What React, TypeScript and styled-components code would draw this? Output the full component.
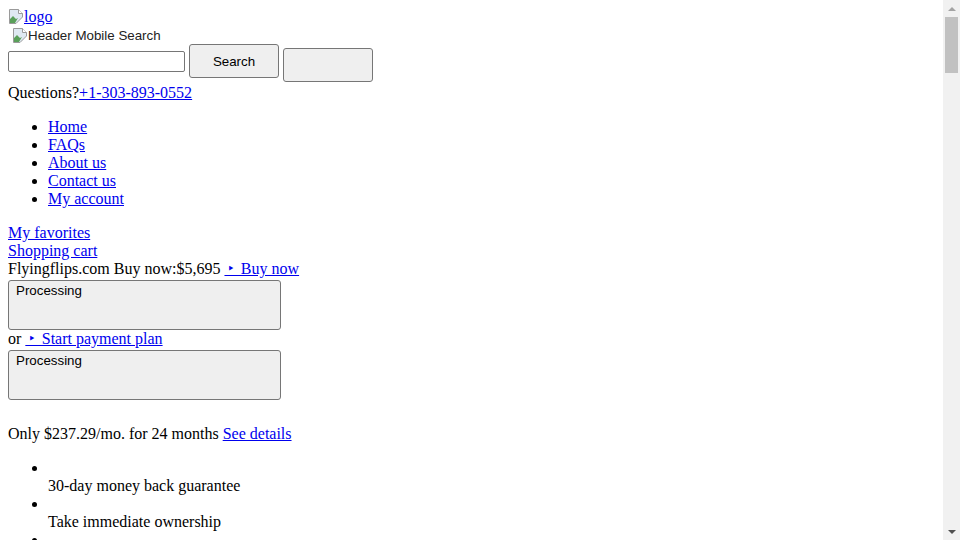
import styled, { createGlobalStyle } from "styled-components";

const GlobalStyle = createGlobalStyle`
  body {
    margin: 8px;
    font-family: "Liberation Serif", "Times New Roman", serif;
    font-size: 16px;
    color: #000;
    background: #fff;
  }
  a {
    color: #0000ee;
  }
`;

const Line = styled.div`
  height: 18px;
  line-height: 18px;
  white-space: nowrap;
`;

const LogoLink = styled.a`
  svg {
    vertical-align: -2px;
  }
`;

const MobileSearch = styled.div`
  display: flex;
  align-items: center;
  height: 18px;
  padding-left: 4px;
  font-family: "Liberation Sans", Arial, sans-serif;
  font-size: 13.333px;
  color: #222;
`;

const SearchRow = styled.form`
  display: flex;
  align-items: flex-start;
  gap: 4px;
  height: 40px;
`;

const SearchInput = styled.input`
  box-sizing: border-box;
  width: 177px;
  height: 21px;
  margin: 7px 0 0;
  padding: 1px 2px;
  border: 1px solid #767676;
  border-radius: 2px;
  font-family: "Liberation Sans", Arial, sans-serif;
  font-size: 13.333px;
`;

const GreyButton = styled.button<{ $offset?: number }>`
  box-sizing: border-box;
  width: 90px;
  height: 34px;
  margin: ${(p) => p.$offset || 0}px 0 0;
  border: 1px solid #767676;
  border-radius: 3px;
  background: #efefef;
  font-family: "Liberation Sans", Arial, sans-serif;
  font-size: 13.333px;
  color: #000;
`;

const NavList = styled.ul`
  margin: 16px 0;
  padding-left: 40px;
  line-height: 18px;
`;

const ProcessingBox = styled.div`
  box-sizing: border-box;
  width: 273px;
  height: 50px;
  margin-top: 2px;
  padding: 2px 7px;
  border: 1px solid #767676;
  border-radius: 3px;
  background: #efefef;
  font-family: "Liberation Sans", Arial, sans-serif;
  font-size: 13.333px;
  line-height: 16px;
`;

const PlanLine = styled(Line)`
  margin-top: 25px;
`;

const PerkList = styled.ul`
  margin: 16px 0;
  padding-left: 40px;
  line-height: 18px;
`;

const PerkIcon = styled.span`
  display: inline-block;
  height: 18px;
  vertical-align: top;
`;

const PerkText = styled.div`
  line-height: 18px;
`;

const Section = styled.section`
  margin-top: 24px;
`;

const SectionTitle = styled.h2`
  font-size: 24px;
  margin: 20px 0;
`;

const Para = styled.p`
  margin: 16px 0;
  line-height: 18px;
`;

/* stand-in for the browser's classic scrollbar seen in the screenshot */
const ScrollTrack = styled.div`
  position: fixed;
  top: 0;
  right: 0;
  bottom: 0;
  width: 17px;
  display: flex;
  flex-direction: column;
  align-items: center;
  background: #f1f1f1;
`;

const ScrollArrow = styled.div`
  display: flex;
  align-items: center;
  justify-content: center;
  width: 17px;
  height: 17px;
  flex: none;
`;

const ScrollThumb = styled.div`
  width: 13px;
  height: 56px;
  flex: none;
  background: #c1c1c1;
`;

const ScrollSpace = styled.div`
  flex: 1;
`;

const BrokenImage = () => (
  <svg width="16" height="16" viewBox="0 0 16 16" aria-hidden>
    <path d="M1.5 1.5h9l4 4v3.5l-6.5 6.5h-6.5z" fill="#dfe9f2" stroke="#9a9a9a" />
    <path d="M10.5 1.5v4h4" fill="#fff" stroke="#9a9a9a" />
    <path d="M2 15V11l3-3 3 3 2-1-3 5z" fill="#5aa05a" />
  </svg>
);

const perks = [
  "30-day money back guarantee",
  "Take immediate ownership",
  "Secure ownership transfer",
  "Fast transfer, usually under 24 hours",
  "Hassle free",
];

const navItems = ["Home", "FAQs", "About us", "Contact us", "My account"];

export default function App() {
  return (
    <>
      <GlobalStyle />
      <Line>
        <LogoLink href="#">
          <BrokenImage />
          logo
        </LogoLink>
      </Line>
      <MobileSearch>
        <BrokenImage />
        Header Mobile Search
      </MobileSearch>
      <SearchRow onSubmit={(e) => e.preventDefault()}>
        <SearchInput type="text" />
        <GreyButton type="submit">Search</GreyButton>
        <GreyButton type="button" $offset={4} />
      </SearchRow>
      <Line>
        Questions?<a href="#">+1-303-893-0552</a>
      </Line>
      <NavList>
        {navItems.map((item) => (
          <li key={item}>
            <a href="#">{item}</a>
          </li>
        ))}
      </NavList>
      <Line>
        <a href="#">My favorites</a>
      </Line>
      <Line>
        <a href="#">Shopping cart</a>
      </Line>
      <Line>
        Flyingflips.com Buy now:$5,695 <a href="#">{"\u2009‣\u2009 Buy now"}</a>
      </Line>
      <ProcessingBox>Processing</ProcessingBox>
      <Line>
        or <a href="#">{"\u2009‣\u2009 Start payment plan"}</a>
      </Line>
      <ProcessingBox>Processing</ProcessingBox>
      <PlanLine>
        Only $237.29/mo. for 24 months <a href="#">See details</a>
      </PlanLine>
      <PerkList>
        {perks.map((perk) => (
          <li key={perk}>
            <PerkIcon />
            <PerkText>{perk}</PerkText>
          </li>
        ))}
      </PerkList>
      <Section>
        <SectionTitle>Flyingflips.com</SectionTitle>
        <Para>
          This premium domain name is available for purchase. Buy it now at a
          fixed price or spread the payments over 24 months with no interest.
        </Para>
        <Para>
          After your purchase, the domain is transferred to your registrar of
          choice. Our team guides you through every step of the process.
        </Para>
        <Para>
          Questions about this domain? Call us or send a message through the
          contact page and we will get back to you right away.
        </Para>
      </Section>
      <Section>
        <SectionTitle>How it works</SectionTitle>
        <Para>1. Choose to buy now or start a payment plan.</Para>
        <Para>2. Complete the secure checkout.</Para>
        <Para>3. Receive the domain transfer within 24 hours.</Para>
      </Section>
      <ScrollTrack aria-hidden>
        <ScrollArrow>
          <svg width="8" height="4" viewBox="0 0 8 4">
            <path d="M0 4L4 0L8 4z" fill="#a3a3a3" />
          </svg>
        </ScrollArrow>
        <ScrollThumb />
        <ScrollSpace />
        <ScrollArrow>
          <svg width="8" height="4" viewBox="0 0 8 4">
            <path d="M0 0L8 0L4 4z" fill="#505050" />
          </svg>
        </ScrollArrow>
      </ScrollTrack>
    </>
  );
}
